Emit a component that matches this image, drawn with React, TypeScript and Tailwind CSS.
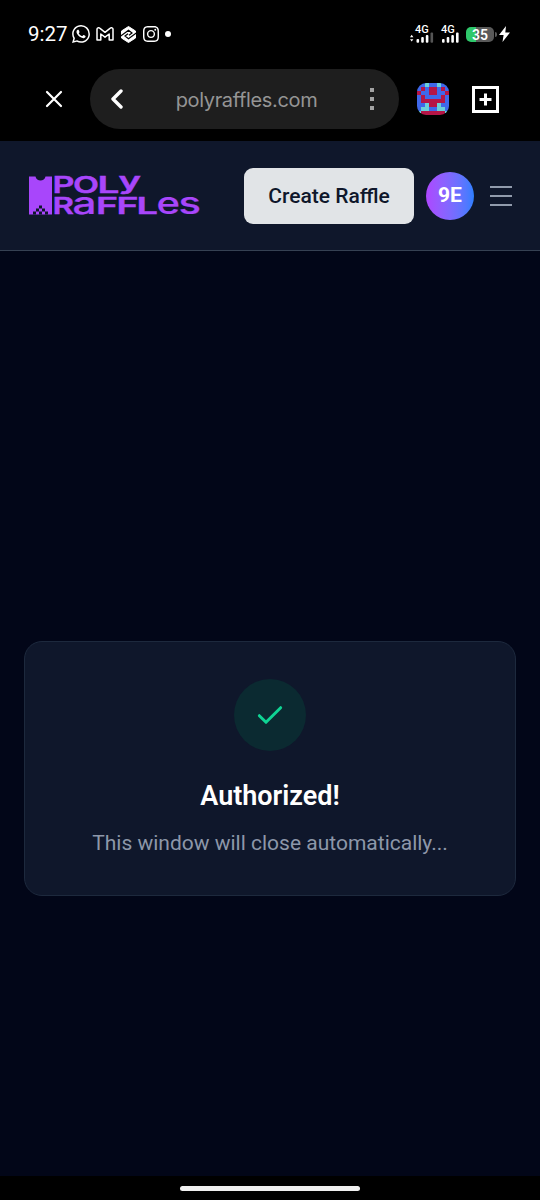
import { SiWhatsapp, SiInstagram } from 'react-icons/si';

const AVATAR_ROWS = [
 'bbcbbcbb',
 'brbrrbrb',
 'rbbrrbbr',
 'brbbbbrb',
 'brrrrrrb',
 'bbcrrcbb',
 'bccbbccb',
 'crrrrrrc',
];

const AVATAR_COLORS: Record<string, string> = { b: '#3f68ea', r: '#b51547', c: '#6bd0d8' };

// Every letter of the wordmark has its own box: [letter, left, width, font size, baseline]
const WORDMARK: [string, number, number, number, number][] = [
 ['P', 23.5, 22, 23, 17.3],
 ['O', 44, 26, 23, 17.3],
 ['L', 68.5, 22, 23, 17.3],
 ['y', 89.5, 22.5, 22.5, 13.2],
 ['R', 23.5, 21.5, 23, 37.9],
 ['a', 43.5, 24, 30, 37.7],
 ['F', 67, 22, 23, 37.9],
 ['F', 87.5, 22, 23, 37.9],
 ['L', 107.5, 21.5, 23, 37.9],
 ['e', 127.5, 23.5, 30, 37.7],
 ['s', 149.5, 22.5, 30, 37.7],
];

function Signal({ x, dim }: { x: number; dim?: boolean }) {
 return (
 <g fill="#fff">
 <rect x={x} y="15" width="2.6" height="3.7" rx="1" />
 <rect x={x + 4.7} y="13" width="2.6" height="5.7" rx="1" />
 <rect x={x + 9.3} y="11" width="2.6" height="7.7" rx="1" />
 <rect x={x + 14} y="8.5" width="2.6" height="10.2" rx="1" fill={dim ? '#555' : '#fff'} />
 </g>
 );
}

function StatusBar() {
 return (
 <div className="flex h-[68px] items-center justify-between pl-7 pr-[30px] text-white">
 <div className="flex items-center">
 <span className="w-[44px] text-[20.5px] leading-none">9:27</span>
 <SiWhatsapp className="size-[18px]" />
 <svg className="ml-[6px] h-[14px] w-[18px]" viewBox="0 0 18 14" fill="none" stroke="#fff" strokeWidth="1.5" strokeLinejoin="round">
 <path d="M1 13V2.2C1 .8 2.6.3 3.7 1.2L9 5.3l5.3-4.1C15.4.3 17 .8 17 2.2V13h-3.800V7L9 10.200 4.800 7v6z" />
 </svg>
 <svg className="ml-[6px] size-[17px]" viewBox="0 0 17 17">
 <path d="M8.500.5L15.500 5v7l-7 4.500L1.500 12V5z" fill="#fff" stroke="#fff" strokeLinejoin="round" />
 <path d="M0 10.500l8.500-6.300 3.500 2.800-3 2.200M17 6.500l-8.500 6.300L5 10l3-2.200" fill="none" stroke="#000" strokeWidth="1.2" />
 </svg>
 <SiInstagram className="ml-[6px] size-[16px]" />
 <span className="ml-[6px] size-[6px] rounded-full bg-white" />
 </div>
 <div className="flex items-center">
 <svg className="h-[20px] w-[56px] overflow-visible" viewBox="0 0 56 20">
 <text x="5" y="9" fontSize="11" fontWeight="500" fill="#fff">4G</text>
 <text x="31" y="9" fontSize="11" fontWeight="500" fill="#fff">4G</text>
 <path d="M0 13.200l1.700-2.400 1.700 2.400zM0 15.200l1.700 2.400 1.700-2.400z" fill="#fff" />
 <Signal x={6.5} dim />
 <Signal x={32} />
 </svg>
 <div className="flex h-[15px] w-[28px] items-center justify-center rounded-[5px] bg-[linear-gradient(90deg,#2fc86b_37%,#595959_37%)] pt-[2px] text-[14px] font-semibold leading-none">
 35
 </div>
 <span className="ml-px h-[5px] w-[2px] rounded-r bg-[#595959]" />
 <svg className="ml-[2px] h-[16px] w-[11px]" viewBox="0 0 11 16">
 <path d="M7 0L0 9h4.600L3.500 16 11 6.500H6.300z" fill="#fff" />
 </svg>
 </div>
 </div>
 );
}

function BrowserBar() {
 return (
 <div className="flex h-[73px] items-start pt-px">
 <div className="flex h-[60px] w-[90px] items-center pl-[45px]">
 <svg className="size-[18px]" viewBox="0 0 18 18" stroke="#fff" strokeWidth="2.2" strokeLinecap="round">
 <path d="M2 2l14 14M16 2L2 16" />
 </svg>
 </div>
 <div className="flex h-[60px] w-[309px] items-center rounded-full bg-[#1e1e1e] pl-[21px] pr-[24px]">
 <svg className="h-[20px] w-[13px]" viewBox="0 0 13 20" fill="none" stroke="#fff" strokeWidth="3.4" strokeLinecap="round" strokeLinejoin="round">
 <path d="M10 2L2 10l8 8" />
 </svg>
 <span className="flex-1 pr-px pt-[2px] text-center font-[Inter,sans-serif] text-[20px] tracking-[-0.35px] text-[#959595]">
 polyraffles.com
 </span>
 <span className="flex w-[5px] flex-col gap-[5px]">
 <i className="size-[4px] bg-[#a3a3a3]" />
 <i className="size-[4px] bg-[#a3a3a3]" />
 <i className="size-[4px] bg-[#a3a3a3]" />
 </span>
 </div>
 <div className="flex h-[60px] items-center pl-[18px]">
 <div className="grid size-[32px] grid-cols-8 grid-rows-8 overflow-hidden rounded-[9px]">
 {AVATAR_ROWS.join('').split('').map((cell, i) => (
 <span key={i} style={{ backgroundColor: AVATAR_COLORS[cell] }} />
 ))}
 </div>
 <svg className="ml-[23px] size-[27px]" viewBox="0 0 27 27" fill="none" stroke="#fff" strokeWidth="3">
 <path d="M1.500 1.500h24v24h-24zM13.500 7.500v12M7.500 13.500h12" />
 </svg>
 </div>
 </div>
 );
}

function Logo() {
 return (
 <svg className="h-[40px] w-[172px] overflow-visible" viewBox="0 0 172 40" fill="#a846fb" aria-label="Poly Raffles">
 <path d="M0 .5h6.500c.8 5.300 9.200 5.300 10 0H23v38H0z" />
 <path
 fill="#0f172b"
 d="M10 29.500h3v3h-3zM7 32.500h3v3H7zM13 32.500h3v3h-3zM4 35.500h3v3H4zM10 35.500h3v3h-3zM16 35.500h3v3h-3z"
 />
 {WORDMARK.map(([letter, x, width, size, y], i) => (
 <text
 key={i}
 x={x}
 y={y}
 fontSize={size}
 fontWeight={size > 25 ? 500 : 600}
 fontFamily="Inter, sans-serif"
 stroke="#a846fb"
 strokeWidth={size > 25 ? 0.2 : 0.4}
 textLength={width}
 lengthAdjust="spacingAndGlyphs"
 >
 {letter}
 </text>
 ))}
 </svg>
 );
}

function Header() {
 return (
 <header className="flex h-[110px] items-center border-b border-[#364153] bg-[#0f172b] pl-[29px] pt-px">
 <Logo />
 <button className="ml-[43px] h-[56px] w-[170px] rounded-[9px] bg-[#e1e4e7] pt-px text-[21px] font-medium text-[#0f172b]">
 Create Raffle
 </button>
 <div className="ml-3 flex size-12 items-center justify-center rounded-full bg-linear-to-r from-[#ad46ff] to-[#2b7fff] text-[21px] font-bold text-white">
 9E
 </div>
 <div className="ml-4 flex w-[22px] flex-col gap-[7px]">
 <span className="h-[2px] bg-[#919bac]" />
 <span className="h-[2px] bg-[#919bac]" />
 <span className="h-[2px] bg-[#919bac]" />
 </div>
 </header>
 );
}

export default function App() {
 return (
 <div className="flex h-[1200px] w-[540px] flex-col overflow-hidden bg-black font-[Roboto,sans-serif]">
 <StatusBar />
 <BrowserBar />
 <Header />
 <main className="flex-1 bg-[#020618] px-6 pt-[390px]">
 <div className="flex h-[255px] flex-col items-center rounded-[18px] border-[1.5px] border-[#1d293d] bg-[#0f172b] pt-[37px]">
 <div className="flex size-[72px] items-center justify-center rounded-full bg-[#0b2a31]">
 <svg className="size-8" viewBox="0 0 24 24" fill="none" stroke="#0fd494" strokeWidth="2.2" strokeLinecap="round" strokeLinejoin="round">
 <path d="M20 6.500l-11 11-5-5" />
 </svg>
 </div>
 <h1 className="mt-[27px] text-[27px] font-semibold leading-9 text-white">Authorized!</h1>
 <p className="mt-[13px] text-[21px] leading-[32px] text-[#8d97a9]">This window will close automatically...</p>
 </div>
 </main>
 <div className="flex h-[24px] justify-center pt-[10px]">
 <span className="h-[5px] w-[180px] rounded-full bg-[#f0f0f0]" />
 </div>
 </div>
 );
}
